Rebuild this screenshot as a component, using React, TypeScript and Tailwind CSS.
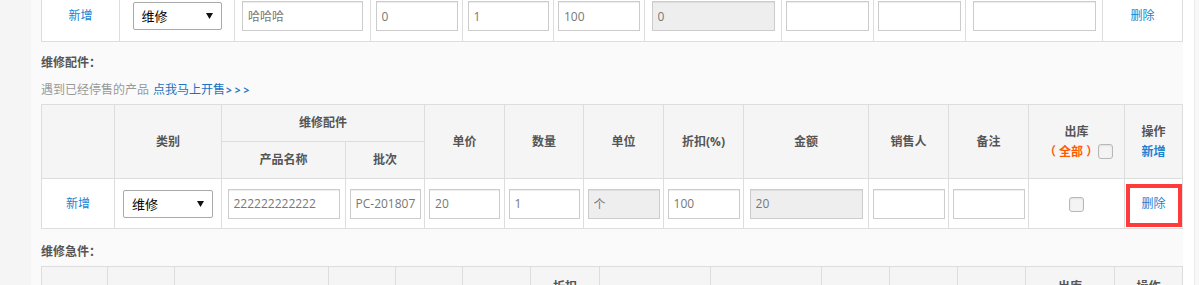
import React from "react";

function Inp({ w, value = "", disabled = false }: { w: string; value?: string; disabled?: boolean }) {
  return (
    <input
      readOnly
      value={value}
      className={
        "inline-block align-middle h-[30px] pl-[5px] pr-[2px] text-left text-[12px] text-[#777] border border-[#cccccc] shadow-[inset_0_1px_1px_rgba(0,0,0,0.075)] outline-none " +
        w +
        (disabled ? " bg-[#eeeeee]" : " bg-white")
      }
    />
  );
}

function Sel({ w }: { w: string }) {
  return (
    <div
      className={
        "inline-flex align-middle items-center justify-between h-[28px] pl-[8px] pr-[8px] bg-white border border-[#a9a9a9] rounded-[2px] text-[13px] text-black text-left " +
        w
      }
    >
      <span className="leading-[20px]">维修</span>
      <svg width="7" height="6" viewBox="0 0 7 6">
        <polygon points="0,0 7,0 3.5,6" fill="#111" />
      </svg>
    </div>
  );
}

function Box() {
  return (
    <span className="inline-block align-middle w-[15px] h-[15px] rounded-[3px] border border-[#b8b8b8] bg-[#f4f4f4] shadow-[inset_0_1px_2px_rgba(0,0,0,0.08)]" />
  );
}

const td = "border border-[#dddddd] text-center align-middle p-0";
const th = "border border-[#dddddd] text-center align-middle p-0 bg-[#f5f5f5] font-bold text-[#555] text-[12px] leading-[20px]";
const link = "text-[#1b82d1] text-[12px]";

export default function App() {
  return (
    <div className="flex w-[1199px] h-[285px] overflow-hidden [font-family:'Open_Sans','Noto_Sans_CJK_SC',sans-serif] text-[12px]">
      <div className="w-[31px] shrink-0 bg-[#f5f5f5]" />
      <div className="w-[1152px] shrink-0 bg-[#fafafa] pl-[10px] pr-[1px]">
        {/* table 1 */}
        <table className="table-fixed border-collapse w-[1141px] bg-white -mt-[10px]">
          <colgroup>
            <col className="w-[78px]" />
            <col className="w-[115px]" />
            <col className="w-[136px]" />
            <col className="w-[92px]" />
            <col className="w-[91px]" />
            <col className="w-[91px]" />
            <col className="w-[137px]" />
            <col className="w-[92px]" />
            <col className="w-[92px]" />
            <col className="w-[137px]" />
            <col className="w-[80px]" />
          </colgroup>
          <tbody>
            <tr className="h-[51px]">
              <td className={td}>
                <span className={link}>新增</span>
              </td>
              <td className={td}>
                <Sel w="w-[89px]" />
              </td>
              <td className={td}>
                <Inp w="w-[121px]" value="哈哈哈" />
              </td>
              <td className={td}>
                <Inp w="w-[82px]" value="0" />
              </td>
              <td className={td}>
                <Inp w="w-[81px]" value="1" />
              </td>
              <td className={td}>
                <Inp w="w-[82px]" value="100" />
              </td>
              <td className={td}>
                <Inp w="w-[123px]" value="0" disabled />
              </td>
              <td className={td}>
                <Inp w="w-[83px]" />
              </td>
              <td className={td}>
                <Inp w="w-[83px]" />
              </td>
              <td className={td}>
                <Inp w="w-[123px]" />
              </td>
              <td className={td}>
                <span className={link}>删除</span>
              </td>
            </tr>
          </tbody>
        </table>

        <div className="mt-[11px] h-[20px] leading-[20px] font-bold text-[#555] text-[12px]">维修配件：</div>
        <div className="mt-[7px] h-[20px] leading-[20px] text-[12px] text-[#999] flex items-center">
          <span>遇到已经停售的产品</span>
          <span className="ml-[4px] text-[#1a73c0]">点我马上开售</span>
          <span className="ml-[1px] text-[#1a73c0] text-[10px] font-bold tracking-[3px] leading-[20px]">&gt;&gt;&gt;</span>
        </div>

        {/* table 2 */}
        <table className="table-fixed border-collapse w-[1141px] mt-[4px]">
          <colgroup>
            <col className="w-[73px]" />
            <col className="w-[107px]" />
            <col className="w-[124px]" />
            <col className="w-[79px]" />
            <col className="w-[80px]" />
            <col className="w-[79px]" />
            <col className="w-[80px]" />
            <col className="w-[80px]" />
            <col className="w-[125px]" />
            <col className="w-[80px]" />
            <col className="w-[80px]" />
            <col className="w-[96px]" />
            <col className="w-[58px]" />
          </colgroup>
          <thead>
            <tr className="h-[37px]">
              <th className={th} rowSpan={2}></th>
              <th className={th} rowSpan={2}>类别</th>
              <th className={th} colSpan={2}>维修配件</th>
              <th className={th} rowSpan={2}>单价</th>
              <th className={th} rowSpan={2}>数量</th>
              <th className={th} rowSpan={2}>单位</th>
              <th className={th} rowSpan={2}>折扣(%)</th>
              <th className={th} rowSpan={2}>金额</th>
              <th className={th} rowSpan={2}>销售人</th>
              <th className={th} rowSpan={2}>备注</th>
              <th className={th} rowSpan={2}>
                <div>出库</div>
                <div className="flex items-center justify-center pl-[4px]">
                  <span className="text-[#ff5a00]">（ 全部 ）</span>
                  <Box />
                </div>
              </th>
              <th className={th} rowSpan={2}>
                <div>操作</div>
                <div className="text-[#1b82d1]">新增</div>
              </th>
            </tr>
            <tr className="h-[37px]">
              <th className={th}>产品名称</th>
              <th className={th}>批次</th>
            </tr>
          </thead>
          <tbody className="bg-white">
            <tr className="h-[50px]">
              <td className={td}>
                <span className={link}>新增</span>
              </td>
              <td className={td}>
                <Sel w="w-[90px]" />
              </td>
              <td className={td}>
                <Inp w="w-[112px]" value="222222222222" />
              </td>
              <td className={td}>
                <Inp w="w-[71px]" value="PC-201807" />
              </td>
              <td className={td}>
                <Inp w="w-[71px]" value="20" />
              </td>
              <td className={td}>
                <Inp w="w-[71px]" value="1" />
              </td>
              <td className={td}>
                <Inp w="w-[72px]" value="个" disabled />
              </td>
              <td className={td}>
                <Inp w="w-[72px]" value="100" />
              </td>
              <td className={td}>
                <Inp w="w-[113px]" value="20" disabled />
              </td>
              <td className={td}>
                <Inp w="w-[72px]" />
              </td>
              <td className={td}>
                <Inp w="w-[72px]" />
              </td>
              <td className={td}>
                <Box />
              </td>
              <td className={td + " relative"}>
                <span className={link}>删除</span>
                <div className="absolute left-[1px] right-0 top-[5px] bottom-[1px] border-[4px] border-[#ff3b3b] pointer-events-none" />
              </td>
            </tr>
          </tbody>
        </table>

        <div className="mt-[13px] h-[20px] leading-[20px] font-bold text-[#555] text-[12px]">维修急件：</div>

        {/* table 3 */}
        <table className="table-fixed border-collapse w-[1141px] mt-[4px]">
          <colgroup>
            <col className="w-[66px]" />
            <col className="w-[67px]" />
            <col className="w-[154px]" />
            <col className="w-[67px]" />
            <col className="w-[67px]" />
            <col className="w-[68px]" />
            <col className="w-[69px]" />
            <col className="w-[111px]" />
            <col className="w-[111px]" />
            <col className="w-[68px]" />
            <col className="w-[68px]" />
            <col className="w-[68px]" />
            <col className="w-[89px]" />
            <col className="w-[68px]" />
          </colgroup>
          <thead>
            <tr className="h-[75px]">
              <th className={th}></th>
              <th className={th}></th>
              <th className={th}></th>
              <th className={th}></th>
              <th className={th}></th>
              <th className={th}></th>
              <th className={th + " align-top pt-[10px]"}>
                <div>折扣</div>
                <div>(%)</div>
              </th>
              <th className={th}></th>
              <th className={th}></th>
              <th className={th}></th>
              <th className={th}></th>
              <th className={th}></th>
              <th className={th + " align-top pt-[10px]"}>
                <div>出库</div>
                <div className="text-[#ff5a00]">（全部）</div>
              </th>
              <th className={th + " align-top pt-[10px]"}>
                <div>操作</div>
                <div className="text-[#1b82d1]">新增</div>
              </th>
            </tr>
          </thead>
        </table>
      </div>
      <div className="w-[11px] shrink-0 bg-white" />
      <div className="w-px shrink-0 bg-[#ececec]" />
      <div className="flex-1 bg-[#f8f8f8]" />
    </div>
  );
}
